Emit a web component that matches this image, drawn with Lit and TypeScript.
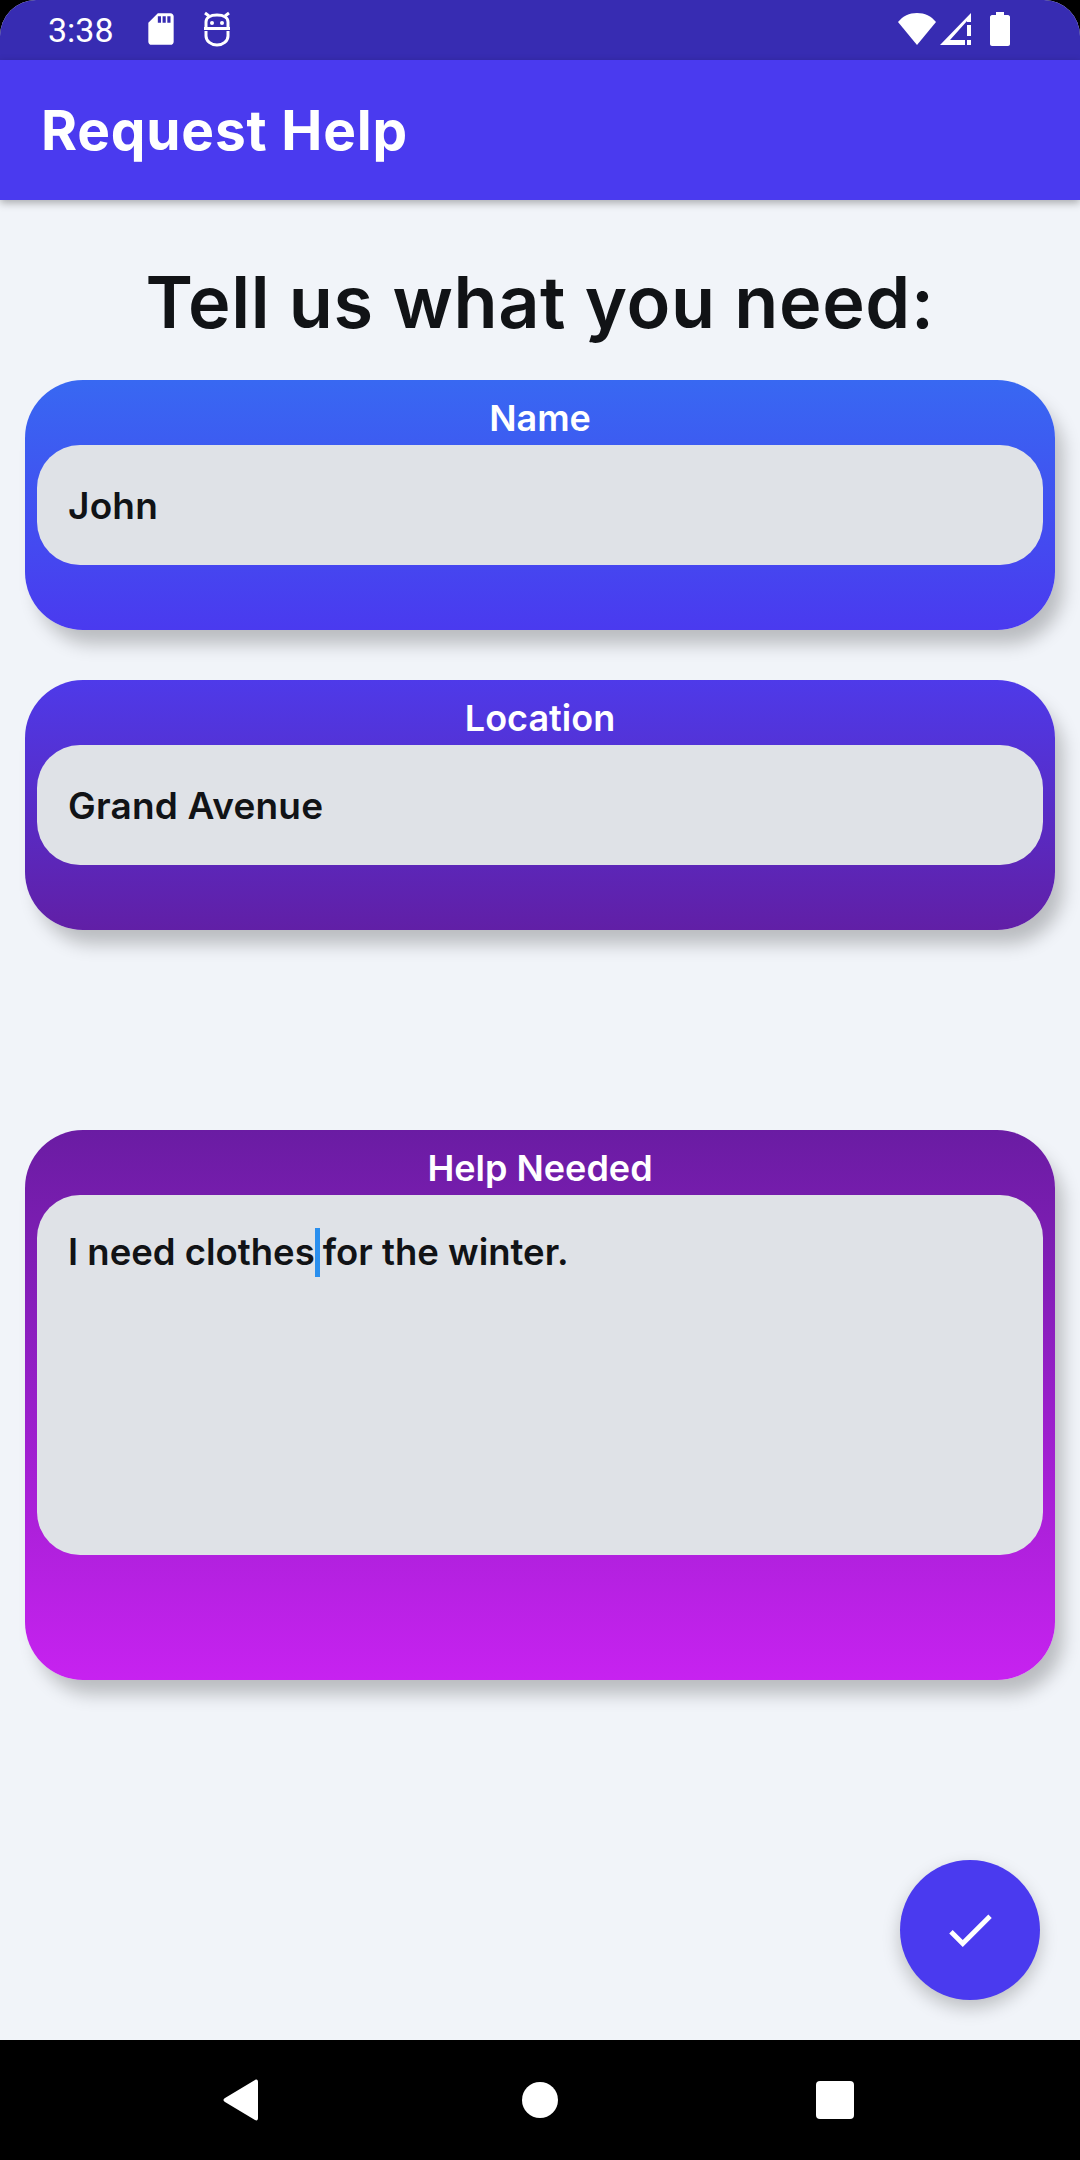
import { LitElement, html, css } from "lit";
import { customElement } from "lit/decorators.js";

@customElement("app-root")
export class AppRoot extends LitElement {
  static styles = css`
    :host { display: block; width: 1080px; height: 2160px; background: #000; font-family: "Inter", "Liberation Sans", sans-serif; overflow: hidden; }
    .screen { position: relative; height: 2040px; display: flex; flex-direction: column; background: #f1f4f9; border-radius: 36px 36px 0 0; overflow: hidden; }
    .status { height: 60px; flex: none; background: #372cb2; display: flex; align-items: center; color: #fff; padding: 0 70px 0 48px; }
    .time { font: 400 34px/60px Roboto, sans-serif; width: 94px; margin-top: -1px; }
    .status svg { display: block; fill: #fff; }
    .sd { width: 38px; height: 38px; margin-top: -2px; }
    .robot { width: 38px; height: 38px; margin-left: 18px; margin-top: -2px; }
    .spacer { flex: 1; }
    .wifi { width: 40px; height: 34px; margin-top: -2px; }
    .signal { width: 34px; height: 34px; margin-left: 2px; margin-top: -2px; }
    .battery { width: 20px; height: 34px; margin-left: 17px; margin-top: -2px; }
    .appbar { height: 140px; flex: none; background: #4a3aef; color: #fff; display: flex; align-items: center; padding-left: 41px; font-size: 55px; font-weight: 700; letter-spacing: 0.8px; box-shadow: 0 3px 8px rgba(0,0,0,.3); z-index: 1; }
    .content { flex: 1; display: flex; flex-direction: column; padding: 0 25px; }
    h1 { margin: 0; height: 180px; box-sizing: border-box; display: flex; align-items: center; justify-content: center; font-size: 72px; font-weight: 600; color: #111316; padding-top: 22px; letter-spacing: 0.6px; }
    .card { border-radius: 58px; padding: 0 12px; box-shadow: 10px 16px 18px -2px rgba(0,0,0,.23); color: #fff; }
    .c1 { height: 250px; background: linear-gradient(#3868f2, #4a3aef); }
    .c2 { height: 250px; margin-top: 50px; background: linear-gradient(#4e3ae9, #611fa6); }
    .c3 { height: 550px; margin-top: 200px; background: linear-gradient(#6a1ca3, #c722f0); }
    .label { height: 65px; display: flex; align-items: center; justify-content: center; font-size: 36px; font-weight: 600; padding-top: 11px; box-sizing: border-box; }
    .field { height: 120px; background: #dfe2e7; border-radius: 43px; padding: 1px 31px 0; box-sizing: border-box; display: flex; align-items: center; color: #111316; font-size: 37px; font-weight: 600; letter-spacing: 0.2px; }
    .c3 .field { height: 360px; align-items: flex-start; padding-top: 36px; line-height: 42px; font-size: 36.500px; letter-spacing: 0; }
    .caret { display: inline-block; width: 5px; height: 49px; background: #2a8fee; margin: -3px 3px -4px 0; vertical-align: top; }
    .fab { position: absolute; left: 900px; top: 1860px; width: 140px; height: 140px; border-radius: 50%; background: #4a3aef; box-shadow: 0 8px 18px rgba(0,0,0,.22); display: flex; align-items: center; justify-content: center; }
    .fab svg { width: 58px; height: 58px; fill: #fff; }
    .nav { height: 120px; background: #000; display: flex; align-items: center; position: relative; }
    .nav svg { fill: #fff; display: block; }
    .back { width: 36px; height: 42px; margin-left: 223px; }
    .home { width: 36px; height: 36px; margin-left: 263px; border-radius: 50%; background: #fff; }
    .recent { width: 38px; height: 38px; margin-left: 258px; border-radius: 4px; background: #fff; }
  `;

  render() {
    return html`
      <div class="screen">
        <div class="status">
          <span class="time">3:38</span>
          <svg class="sd" viewBox="0 0 24 24"><path d="M18 2h-8L4 8v12c0 1.1.9 2 2 2h12c1.1 0 2-.9 2-2V4c0-1.100-.9-2-2-2zm-6 6h-2V4h2v4zm3 0h-2V4h2v4zm3 0h-2V4h2v4z"/></svg>
          <svg class="robot" viewBox="0 0 38 38"><g fill="none" stroke="#fff" stroke-width="3"><path d="M8 17V12c0-4 4-7 11-7s11 3 11 7v5"/><path d="M6 18.500h26"/><path d="M8 21v5c0 5 5 9 11 9s11-4 11-9v-5"/><path d="M7 3l4 3M31 3l-4 3"/></g><circle cx="14" cy="13" r="2"/><circle cx="24" cy="13" r="2"/></svg>
          <span class="spacer"></span>
          <svg class="wifi" viewBox="0 0 40 34"><path d="M20 33L1 10C6 4 12 1 20 1s14 3 19 9z"/></svg>
          <svg class="signal" viewBox="0 0 34 34"><path d="M32 1v9h-4v-1L11 28h15v5H1z"/><path d="M28 13h4v11h-4zM28 28h4v5h-4z"/></svg>
          <svg class="battery" viewBox="0 0 20 34"><path d="M6 0h8v3h4c1 0 2 1 2 2v27c0 1-1 2-2 2H2c-1 0-2-1-2-2V5c0-1 1-2 2-2h4z"/></svg>
        </div>
        <div class="appbar">Request Help</div>
        <div class="content">
          <h1>Tell us what you need:</h1>
          <div class="card c1"><div class="label">Name</div><div class="field">John</div></div>
          <div class="card c2"><div class="label">Location</div><div class="field">Grand Avenue</div></div>
          <div class="card c3"><div class="label">Help Needed</div><div class="field"><div>I need clothes<span class="caret"></span>for the winter.</div></div></div>
        </div>
        <div class="fab"><svg viewBox="0 0 24 24"><path d="M9 16.170L4.830 12l-1.420 1.410L9 19 21 7l-1.410-1.410z"/></svg></div>
      </div>
      <div class="nav">
        <svg class="back" viewBox="0 0 36 42"><path d="M32 1c2-1 3 0 3 2v36c0 2-1 3-3 2L2 23c-2-1-2-3 0-4z"/></svg>
        <div class="home"></div>
        <div class="recent"></div>
      </div>
    `;
  }
}
